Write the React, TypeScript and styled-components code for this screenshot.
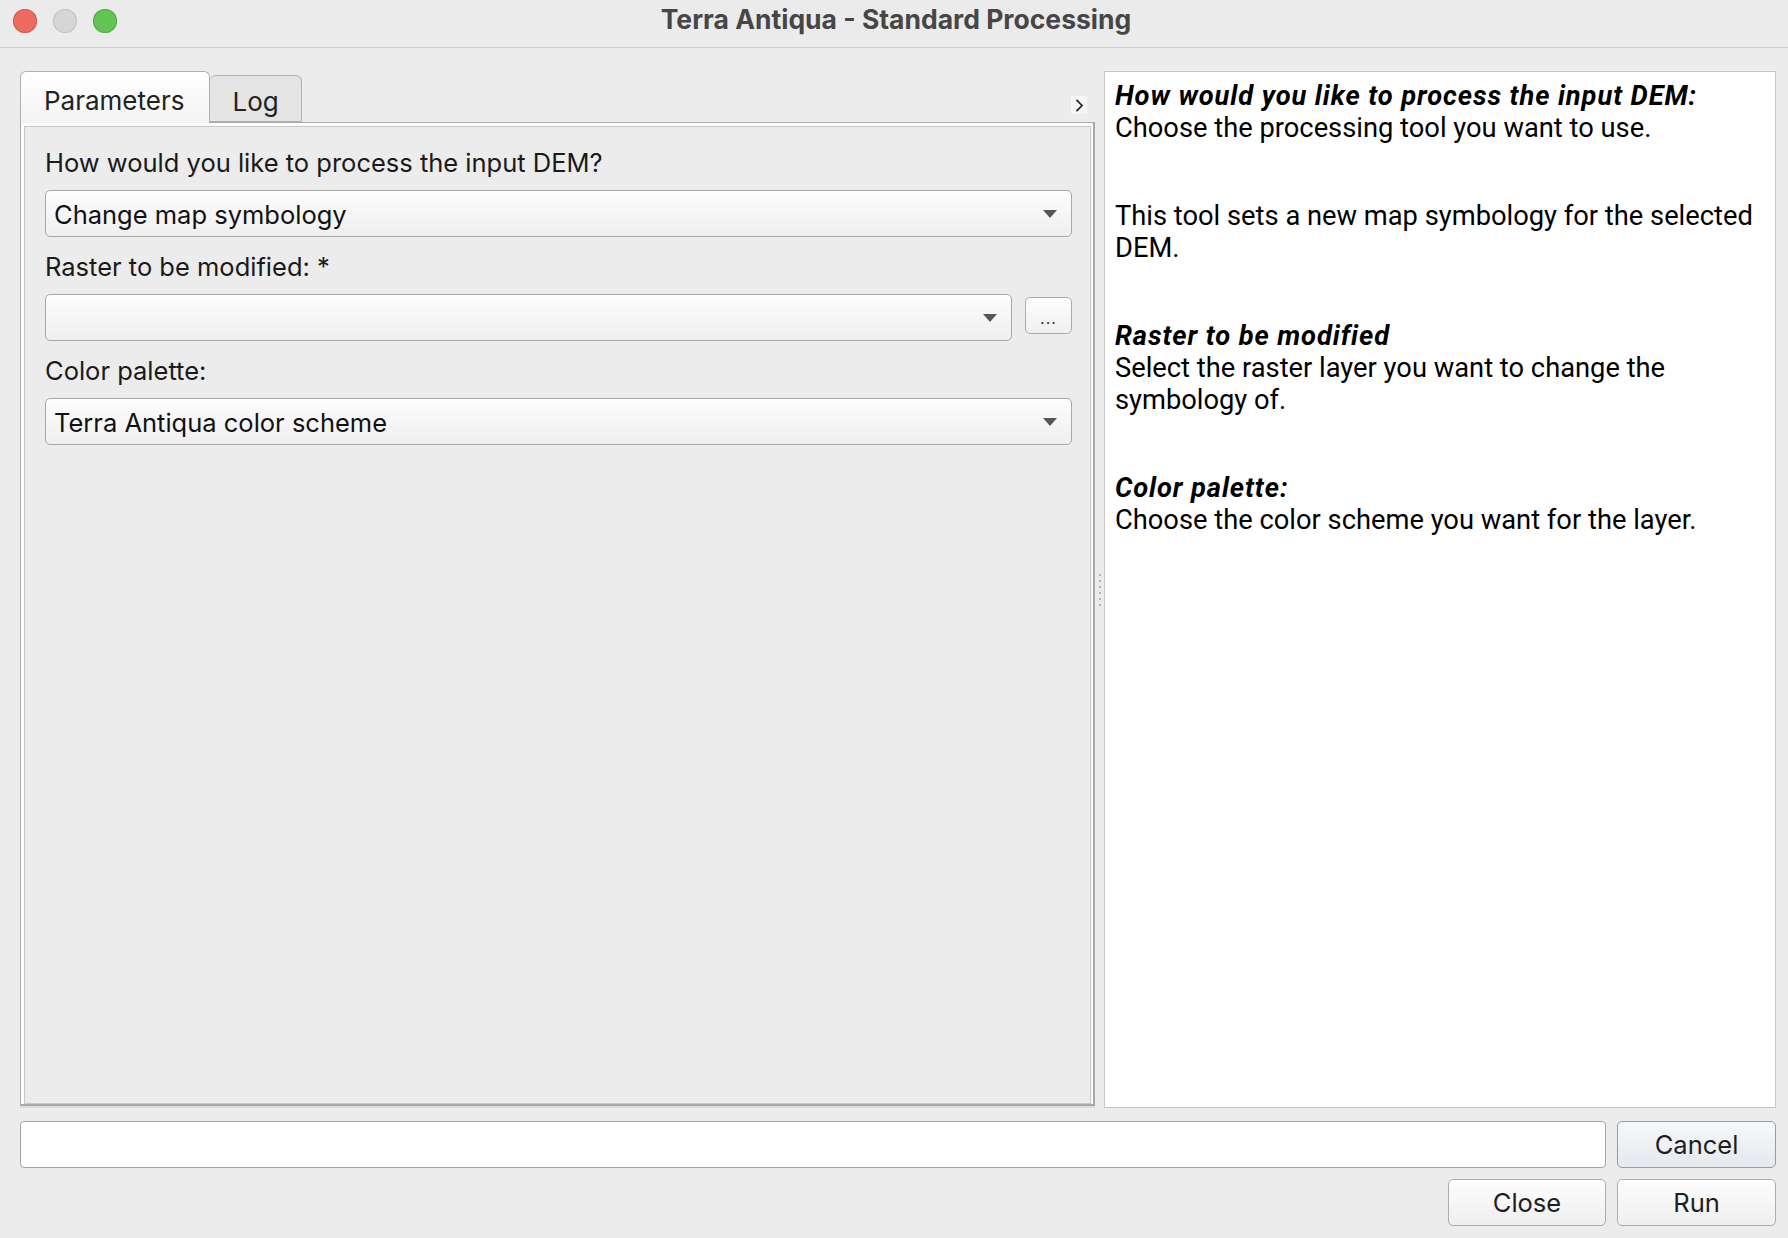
import React from "react";
import styled, { createGlobalStyle } from "styled-components";

const Global = createGlobalStyle`
  html, body { margin: 0; padding: 0; background: #ececec; }
  body {
    width: 1788px; height: 1238px; overflow: hidden;
    font-family: Inter, "Noto Sans", sans-serif;
    color: #1c1c1c;
    -webkit-font-smoothing: antialiased;
  }
  #root { width: 1788px; height: 1238px; }
`;

const Window = styled.div`
  width: 1788px;
  height: 1238px;
  display: flex;
  flex-direction: column;
  background: #ececec;
`;

const TitleBar = styled.div`
  flex: none;
  height: 47px;
  border-bottom: 1px solid #d0d0d0;
  background: #ebebec;
  display: grid;
  grid-template-columns: 1fr auto 1fr;
  align-items: center;
`;

const Lights = styled.div`
  display: flex;
  gap: 16px;
  padding-left: 13px;
  margin-top: -6px;
`;

const Light = styled.span<{ $fill: string; $edge: string }>`
  width: 24px;
  height: 24px;
  border-radius: 50%;
  background: ${(p) => p.$fill};
  box-shadow: inset 0 0 0 1px ${(p) => p.$edge};
`;

const Title = styled.div`
  font-family: Inter, "Noto Sans", sans-serif;
  font-weight: 700;
  font-size: 26.5px;
  color: #464646;
  margin-top: -9px;
  padding-left: 4px;
`;

const Body = styled.div`
  flex: 1;
  min-height: 0;
  display: flex;
  flex-direction: column;
  padding: 23px 12px 12px 20px;
`;

const MainRow = styled.div`
  flex: 1;
  min-height: 0;
  display: flex;
`;

const TabWidget = styled.div`
  width: 1075px;
  flex: none;
  display: flex;
  flex-direction: column;
`;

const TabBar = styled.div`
  height: 51px;
  flex: none;
  display: flex;
  align-items: flex-end;
  position: relative;
  z-index: 1;
`;

const Tab = styled.div<{ $active?: boolean }>`
  box-sizing: border-box;
  height: ${(p) => (p.$active ? "52px" : "47px")};
  margin-bottom: ${(p) => (p.$active ? "-1px" : "0")};
  padding: ${(p) => (p.$active ? "5px 25px 0 23px" : "5px 22px 0 22px")};
  display: flex;
  align-items: center;
  font-size: 26px;
  color: #222;
  border: 1px solid #afafaf;
  border-bottom: ${(p) => (p.$active ? "none" : "1px solid #afafaf")};
  border-left: ${(p) => (p.$active ? "1px solid #afafaf" : "none")};
  border-radius: 6px 6px 0 0;
  background: ${(p) =>
    p.$active ? "linear-gradient(#ffffff, #f4f4f4)" : "#e4e4e4"};
`;

const Spacer = styled.div`
  flex: 1;
`;

const ScrollArrow = styled.div`
  align-self: flex-start;
  margin-top: 25px;
  margin-right: 8px;
  width: 16px;
  height: 18px;
  display: flex;
  align-items: center;
  justify-content: center;
  background: #f6f6f6;
`;

const Pane = styled.div`
  flex: 1;
  min-height: 0;
  display: flex;
  border: 1px solid #a9a9a9;
  border-right-width: 2px;
  border-bottom-width: 2px;
  padding: 3px 2px 0 3px;
  background: #fbfbfb;
  margin-bottom: 2px;
  box-shadow: 0 2px 0 #dcdcdc;
`;

const PaneInner = styled.div`
  flex: 1;
  border: 1px solid #c8c8c8;
  background: #ececec;
  padding: 21px 18px 0 20px;
  display: flex;
  flex-direction: column;
`;

const Label = styled.div`
  font-size: 25.5px;
  line-height: 30px;
  color: #1a1a1a;
  margin-bottom: 12px;
`;

const FieldRow = styled.div`
  display: flex;
  align-items: center;
  gap: 13px;
  margin-bottom: 15px;
`;

const Combo = styled.div`
  flex: 1;
  box-sizing: border-box;
  height: 47px;
  border: 1px solid #a9a9a9;
  border-radius: 5px;
  background: linear-gradient(#fdfdfd, #efefef);
  display: flex;
  align-items: center;
  padding: 1px 14px 0 8px;
  font-size: 25.5px;
  color: #111;
`;

const ComboText = styled.span`
  flex: 1;
`;

const Caret = styled.span`
  width: 0;
  height: 0;
  border-left: 7.5px solid transparent;
  border-right: 7.5px solid transparent;
  border-top: 8px solid #575757;
`;

const SmallButton = styled.div`
  box-sizing: border-box;
  width: 47px;
  height: 37px;
  margin-top: -4px;
  border: 1px solid #ababab;
  border-radius: 5px;
  background: linear-gradient(#fdfdfd, #f0f0f0);
  display: flex;
  align-items: center;
  justify-content: center;
  font-size: 16px;
  letter-spacing: 1px;
  color: #333;
  padding-top: 4px;
`;

const Splitter = styled.div`
  width: 9px;
  flex: none;
  display: flex;
  flex-direction: column;
  align-items: center;
  justify-content: center;
  gap: 4px;
`;

const Dot = styled.span`
  width: 2px;
  height: 2px;
  background: #b4b4b4;
`;

const Help = styled.div`
  flex: 1;
  min-width: 0;
  box-sizing: border-box;
  border: 1px solid #c6c6c6;
  background: #ffffff;
  padding: 8px 10px 0 10px;
  font-family: Roboto, "Liberation Sans", sans-serif;
  font-size: 27.3px;
  line-height: 32px;
  color: #000;
`;

const HelpSection = styled.div`
  margin-bottom: 56px;
`;

const HelpHeading = styled.div`
  font-weight: 700;
  font-style: italic;
  letter-spacing: 0.9px;
`;

const HelpText = styled.div``;

const BottomRow = styled.div<{ $end?: boolean }>`
  flex: none;
  display: flex;
  gap: 11px;
  justify-content: ${(p) => (p.$end ? "flex-end" : "flex-start")};
  margin-top: ${(p) => (p.$end ? "11px" : "13px")};
`;

const Progress = styled.div`
  flex: 1;
  box-sizing: border-box;
  height: 47px;
  border: 1px solid #a5a5a5;
  border-radius: 4px;
  background: #ffffff;
`;

const Button = styled.div<{ $focus?: boolean; $w?: number }>`
  box-sizing: border-box;
  width: ${(p) => p.$w ?? 159}px;
  height: 47px;
  border: 1px solid ${(p) => (p.$focus ? "#6aa2ec" : "#adadad")};
  border-radius: 5px;
  background: ${(p) =>
    p.$focus
      ? "linear-gradient(#f6f8fb, #e5e8ed)"
      : "linear-gradient(#fdfdfd, #efefef)"};
  display: flex;
  align-items: center;
  justify-content: center;
  font-size: 25.5px;
  color: #1e1e1e;
`;

export default function App() {
  return (
    <>
      <Global />
      <Window>
        <TitleBar>
          <Lights>
            <Light $fill="#ee6b60" $edge="#d55a50" />
            <Light $fill="#d6d6d6" $edge="#c2c2c2" />
            <Light $fill="#62c454" $edge="#50ad44" />
          </Lights>
          <Title>Terra Antiqua - Standard Processing</Title>
          <div />
        </TitleBar>
        <Body>
          <MainRow>
            <TabWidget>
              <TabBar>
                <Tab $active>Parameters</Tab>
                <Tab>Log</Tab>
                <Spacer />
                <ScrollArrow>
                  <svg width="10" height="15" viewBox="0 0 10 15">
                    <path d="M2.5 1.8 L8 7.5 L2.5 13.2" fill="none" stroke="#222" strokeWidth="1.7" />
                  </svg>
                </ScrollArrow>
              </TabBar>
              <Pane>
                <PaneInner>
                  <Label>How would you like to process the input DEM?</Label>
                  <FieldRow>
                    <Combo>
                      <ComboText>Change map symbology</ComboText>
                      <Caret />
                    </Combo>
                  </FieldRow>
                  <Label>Raster to be modified: *</Label>
                  <FieldRow>
                    <Combo>
                      <ComboText />
                      <Caret />
                    </Combo>
                    <SmallButton>...</SmallButton>
                  </FieldRow>
                  <Label>Color palette:</Label>
                  <FieldRow>
                    <Combo>
                      <ComboText>Terra Antiqua color scheme</ComboText>
                      <Caret />
                    </Combo>
                  </FieldRow>
                </PaneInner>
              </Pane>
            </TabWidget>
            <Splitter>
              {Array.from({ length: 6 }).map((_, i) => (
                <Dot key={i} />
              ))}
            </Splitter>
            <Help>
              <HelpSection>
                <HelpHeading>How would you like to process the input DEM:</HelpHeading>
                <HelpText>Choose the processing tool you want to use.</HelpText>
              </HelpSection>
              <HelpSection>
                <HelpText>This tool sets a new map symbology for the selected DEM.</HelpText>
              </HelpSection>
              <HelpSection>
                <HelpHeading>Raster to be modified</HelpHeading>
                <HelpText>Select the raster layer you want to change the symbology of.</HelpText>
              </HelpSection>
              <HelpSection>
                <HelpHeading>Color palette:</HelpHeading>
                <HelpText>Choose the color scheme you want for the layer.</HelpText>
              </HelpSection>
            </Help>
          </MainRow>
          <BottomRow>
            <Progress />
            <Button $focus>Cancel</Button>
          </BottomRow>
          <BottomRow $end>
            <Button $w={158}>Close</Button>
            <Button>Run</Button>
          </BottomRow>
        </Body>
      </Window>
    </>
  );
}
